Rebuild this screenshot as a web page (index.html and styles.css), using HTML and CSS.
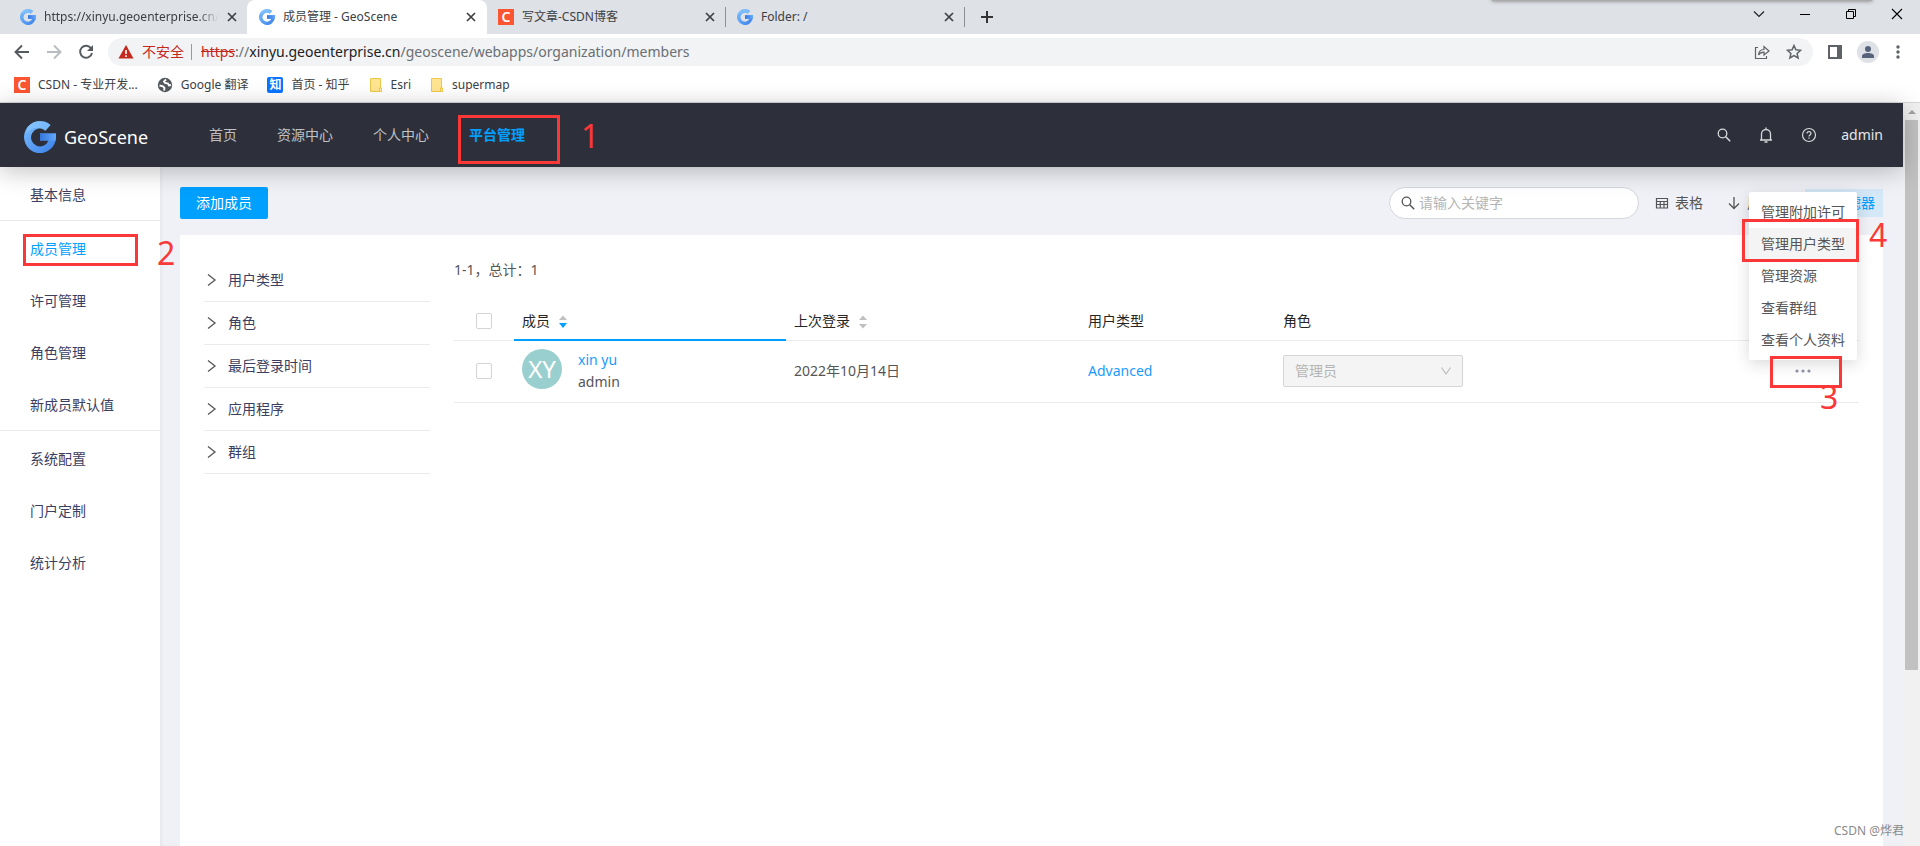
FILE: index.html
```html
<!DOCTYPE html>
<html lang="zh-CN">
<head>
<meta charset="utf-8">
<title>成员管理 - GeoScene</title>
<link rel="stylesheet" href="styles.css">
</head>
<body>
<svg class="defs" aria-hidden="true">
  <defs>
    <linearGradient id="g1" x1="0" y1="0" x2="1" y2="1"><stop offset="0" stop-color="#7cc0ff"/><stop offset="1" stop-color="#3a7fe8"/></linearGradient>
    <linearGradient id="g2" x1="0" y1="0" x2="1" y2="0"><stop offset="0" stop-color="#3577e0"/><stop offset="1" stop-color="#62a9fb"/></linearGradient>
    <symbol id="logo" viewBox="0 0 32 32">
      <path fill="url(#g1)" d="M26.500 4A16 16 0 1 0 32 16V12.500H16V19.500H24.500A9 9 0 1 1 21.500 9.200Z"/>
      <path fill="#8ac8ff" opacity=".6" d="M3 7A16 16 0 0 1 26.500 4L21.500 10A13 13 0 0 0 3 12Z"/>
      <path fill="url(#g2)" d="M16 12.500H32V16L31.500 19.500H16Z"/>
    </symbol>
    <symbol id="x" viewBox="0 0 10 10"><path d="M1 1l8 8M9 1l-8 8" stroke="#3c4043" stroke-width="1.700"/></symbol>
    <symbol id="folder" viewBox="0 0 14 16"><path d="M1.500 1.500h10v9.500h1v3.500h-11z" fill="#ffe591" stroke="#edc84a"/><path d="M10.500 14.500v-3.500h2v3.500z" fill="#fff0b5" stroke="#edc84a"/></symbol>
    <symbol id="search" viewBox="0 0 14 14"><circle cx="5.500" cy="5.500" r="4.300" fill="none" stroke="currentColor" stroke-width="1.300"/><path d="M8.700 8.700l4.500 4.500" stroke="currentColor" stroke-width="1.500"/></symbol>
    <symbol id="chev" viewBox="0 0 10 14"><path d="M1 1.500l7 5.500-7 5.500" fill="none" stroke="#555" stroke-width="1.300"/></symbol>
  </defs>
</svg>

<div class="browser">
  <div class="tabs">
    <div class="tab first"><svg class="fav"><use href="#logo"/></svg><span class="fade">https://xinyu.geoenterprise.cn/</span><button class="close" aria-label="关闭"><svg><use href="#x"/></svg></button></div>
    <div class="tab active"><svg class="fav"><use href="#logo"/></svg><span>成员管理 - GeoScene</span><button class="close" aria-label="关闭"><svg><use href="#x"/></svg></button></div>
    <div class="tab sep"><i class="csdn">C</i><span>写文章-CSDN博客</span><button class="close" aria-label="关闭"><svg><use href="#x"/></svg></button></div>
    <div class="tab sep"><svg class="fav"><use href="#logo"/></svg><span>Folder: /</span><button class="close" aria-label="关闭"><svg><use href="#x"/></svg></button></div>
    <button class="plus" aria-label="新标签页"><svg width="12" height="12"><path d="M6 0v12M0 6h12" stroke="#333" stroke-width="2"/></svg></button>
    <div class="win">
      <button aria-label="搜索标签"><svg width="12" height="12"><path d="M1 3.500l5 5 5-5" fill="none" stroke="#222" stroke-width="1.200"/></svg></button>
      <button aria-label="最小化"><svg width="12" height="12"><path d="M1 6.500h10" stroke="#000"/></svg></button>
      <button aria-label="还原"><svg width="12" height="12"><path d="M1.500 3.500h7v7h-7zM3.500 3.500v-2h7v7h-2" fill="none" stroke="#000"/></svg></button>
      <button aria-label="关闭窗口"><svg width="12" height="12"><path d="M1 1l10 10M11 1L1 11" stroke="#000" stroke-width="1.100"/></svg></button>
    </div>
    <div class="overhang"></div>
  </div>
  <div class="toolbar">
    <button aria-label="后退"><svg width="16" height="16"><path d="M15 8H2M8 1.500L1.500 8 8 14.500" fill="none" stroke="#555a5f" stroke-width="1.900"/></svg></button>
    <button aria-label="前进"><svg width="16" height="16"><path d="M1 8h13M8 1.500L14.500 8 8 14.500" fill="none" stroke="#b9bcbf" stroke-width="1.900"/></svg></button>
    <button aria-label="重新加载"><svg width="16" height="16"><path d="M13.200 4.500A6 6 0 1 0 14 9" fill="none" stroke="#555a5f" stroke-width="1.900"/><path d="M15 1v6H9z" fill="#555a5f"/></svg></button>
    <div class="url">
      <svg width="16" height="14"><path d="M8 0l7.500 13.500H.5z" fill="#c5291d"/><path d="M8 5v4M8 10.300v1.700" stroke="#fff" stroke-width="1.600"/></svg>
      <span class="unsafe">不安全</span>
      <span class="addr"><s>https</s>://<b>xinyu.geoenterprise.cn</b>/geoscene/webapps/organization/members</span>
      <button aria-label="分享"><svg width="16" height="16"><path d="M4 3.500H1.500v11h11V12" fill="none" stroke="#5f6368" stroke-width="1.200"/><path d="M4.500 11c.3-3.800 2.500-5.500 5.500-5.500V2.500l5 4.500-5 4V8.200C7.500 8.200 5.800 9 4.500 11z" fill="none" stroke="#5f6368" stroke-width="1.200"/></svg></button>
      <button aria-label="收藏"><svg width="16" height="16"><path d="M8 1.500l1.900 4.300 4.700.5-3.500 3.100 1 4.600L8 11.600 3.900 14l1-4.600L1.400 6.300l4.700-.5z" fill="none" stroke="#5f6368" stroke-width="1.500"/></svg></button>
    </div>
    <button aria-label="侧边栏"><svg width="14" height="14"><path d="M1 1h12v12H1z" fill="#fff" stroke="#5f6368" stroke-width="2"/><path d="M9 0h5v14H9z" fill="#5f6368"/></svg></button>
    <button class="profile" aria-label="用户"><svg width="22" height="22"><circle cx="11" cy="11" r="11" fill="#dee1e6"/><circle cx="11" cy="8" r="3" fill="#56627a"/><path d="M5 17v-2c0-2 3-3 6-3s6 1 6 3v2z" fill="#56627a"/></svg></button>
    <button aria-label="菜单"><svg width="6" height="16"><g fill="#5f6368"><circle cx="3" cy="3" r="1.700"/><circle cx="3" cy="8" r="1.700"/><circle cx="3" cy="13" r="1.700"/></g></svg></button>
  </div>
  <div class="bookmarks">
    <a href="#"><i class="csdn">C</i>CSDN - 专业开发...</a>
    <a href="#"><svg class="fav" viewBox="0 0 16 16"><circle cx="8" cy="8" r="7.200" fill="#555a5f"/><path d="M2.500 8.500l3.500.8 1.500 1.700-.5 2.500M9 2.500L7 4.500l1 1.500 3 .5 1 2 2-.5" fill="none" stroke="#fff" stroke-width="1.900"/></svg>Google 翻译</a>
    <a href="#"><i class="zhi">知</i>首页 - 知乎</a>
    <a href="#"><svg class="folder"><use href="#folder"/></svg>Esri</a>
    <a href="#"><svg class="folder"><use href="#folder"/></svg>supermap</a>
  </div>
</div>

<div class="viewport">
  <div class="app">
    <header class="header">
      <a class="brand" href="#"><svg width="32" height="32"><use href="#logo"/></svg>GeoScene</a>
      <nav class="nav">
        <a href="#">首页</a><a href="#">资源中心</a><a href="#">个人中心</a>
        <a href="#" class="current">平台管理<span class="mark m1"><em>1</em></span></a>
      </nav>
      <div class="tools">
        <button aria-label="搜索"><svg width="14" height="14"><use href="#search"/></svg></button>
        <button aria-label="通知"><svg width="14" height="16"><path d="M2.500 13V7a4.500 4.500 0 0 1 9 0v6M1 13h12M7 .5V2M5.500 15h3" fill="none" stroke="currentColor" stroke-width="1.300"/></svg></button>
        <button aria-label="帮助"><svg width="16" height="16"><circle cx="8" cy="8" r="6.500" fill="none" stroke="currentColor" stroke-width="1.200"/><path d="M6 6.500c0-2.600 4-2.600 4 0C10 8 8 8 8 9.500M8 10.500v1.300" fill="none" stroke="currentColor" stroke-width="1.200"/></svg></button>
        <a href="#">admin</a>
      </div>
    </header>
    <div class="body">
      <aside class="side">
        <div class="group"><a href="#">基本信息</a></div>
        <div class="group">
          <a href="#" class="current">成员管理<span class="mark m2"><em>2</em></span></a>
          <a href="#">许可管理</a><a href="#">角色管理</a><a href="#">新成员默认值</a>
        </div>
        <div class="group"><a href="#">系统配置</a><a href="#">门户定制</a><a href="#">统计分析</a></div>
      </aside>
      <main class="main">
        <div class="actions">
          <button class="primary">添加成员</button>
          <label class="search"><svg width="14" height="14"><use href="#search"/></svg><input type="text" placeholder="请输入关键字" aria-label="关键字"></label>
          <button class="tool"><svg width="14" height="14"><path d="M1 2.500h12M1.500 2v10.500M12.500 2v10.500M1 12h12M1 5.500h12M1 8.500h12M5.300 5.500V12M9 5.500V12" fill="none" stroke="#555" stroke-width="1.200"/></svg>表格</button>
          <button class="tool sort"><svg width="14" height="14"><path d="M7 1v11.500M2 7.500l5 5 5-5" fill="none" stroke="#555" stroke-width="1.300"/></svg>用户</button>
          <button class="tool filter"><svg width="14" height="14"><path d="M1 2h12L8.500 7.500V13h-3V7.500z" fill="none" stroke="currentColor"/></svg>过滤器</button>
        </div>
        <section class="card">
          <div class="facets">
            <button><svg><use href="#chev"/></svg>用户类型</button>
            <button><svg><use href="#chev"/></svg>角色</button>
            <button><svg><use href="#chev"/></svg>最后登录时间</button>
            <button><svg><use href="#chev"/></svg>应用程序</button>
            <button><svg><use href="#chev"/></svg>群组</button>
          </div>
          <div class="list">
            <p class="count">1-1，总计：1</p>
            <table>
              <colgroup><col class="c-check"><col class="c-member"><col class="c-login"><col class="c-type"><col><col class="c-more"></colgroup>
              <thead>
                <tr>
                  <th class="pick"><input type="checkbox" aria-label="全选"></th>
                  <th class="sorted">成员<svg class="sorter" viewBox="0 0 8 14"><path d="M0 5l4-4.500L8 5z" fill="#bfbfbf"/><path class="on" d="M0 8l4 5 4-5z"/></svg></th>
                  <th>上次登录<svg class="sorter" viewBox="0 0 8 14"><path d="M0 5l4-4.500L8 5zM0 9l4 4.500L8 9z" fill="#bfbfbf"/></svg></th>
                  <th>用户类型</th><th>角色</th><th></th>
                </tr>
              </thead>
              <tbody>
                <tr>
                  <td class="pick"><input type="checkbox" aria-label="选择 xin yu"></td>
                  <td><div class="member"><span class="avatar">XY</span><span class="who"><a href="#">xin yu</a><span>admin</span></span></div></td>
                  <td>2022年10月14日</td>
                  <td><a href="#">Advanced</a></td>
                  <td><div class="select"><select disabled aria-label="角色"><option>管理员</option></select><svg width="12" height="12"><path d="M1.500 2.500L6 9l4.500-6.500" fill="none" stroke="#bbb" stroke-width="1.100"/></svg></div></td>
                  <td class="more">
                    <button class="dots" aria-label="更多"><svg width="16" height="4"><g fill="#8d93a8"><circle cx="2" cy="2" r="1.600"/><circle cx="8" cy="2" r="1.600"/><circle cx="14" cy="2" r="1.600"/></g></svg></button>
                    <div class="menu">
                      <a href="#">管理附加许可</a>
                      <a href="#" class="hover">管理用户类型<span class="mark m4"><em>4</em></span></a>
                      <a href="#">管理资源</a><a href="#">查看群组</a><a href="#">查看个人资料</a>
                    </div>
                    <span class="mark m3"><em>3</em></span>
                  </td>
                </tr>
              </tbody>
            </table>
          </div>
        </section>
      </main>
    </div>
  </div>
  <div class="scrollbar"><svg width="8" height="4"><path d="M0 4l4-4 4 4z" fill="#a3a3a3"/></svg><div class="thumb"></div></div>
  <div class="watermark">CSDN @烨君</div>
</div>
</body>
</html>
```
FILE: styles.css
```css
* { box-sizing: border-box; }
body {
  margin: 0;
  height: 100vh;
  display: flex;
  flex-direction: column;
  overflow: hidden;
  font: 14px/20px "Noto Sans", "Noto Sans CJK SC", sans-serif;
  color: #555;
  background: #fff;
}
.defs { position: absolute; width: 0; height: 0; }
button { padding: 0; border: 0; background: none; font: inherit; color: inherit; display: flex; align-items: center; }
a { color: inherit; text-decoration: none; }
svg { display: block; flex: none; }

/* browser frame */
.browser { flex: none; color: #3c4043; font-size: 12px; border-bottom: 1px solid #d5d7da; }
.tabs { position: relative; display: flex; align-items: center; height: 34px; background: #dee1e6; }
.tab { display: flex; align-items: center; gap: 8px; width: 239px; height: 28px; padding: 0 10px 0 11px; white-space: nowrap; }
.tab.first { width: 247px; padding: 0 10px 0 20px; }
.tab.active { width: 240px; height: 34px; padding: 0 11px 0 12px; background: #fff; border-radius: 8px 8px 0 0; }
.tab.sep { border-right: 1px solid #8b8e92; height: 20px; }
.tab span { flex: 1; min-width: 0; overflow: hidden; }
.fade { -webkit-mask-image: linear-gradient(90deg, #000 88%, transparent); mask-image: linear-gradient(90deg, #000 88%, transparent); }
.fav { width: 16px; height: 16px; }
.close svg { width: 10px; height: 10px; }
.csdn, .zhi { width: 16px; height: 16px; flex: none; background: #fc5531; color: #fff; font-style: normal; font-weight: 600; font-size: 14px; line-height: 16px; text-align: center; }
.zhi { background: #0a74ff; border-radius: 2px; font-size: 12px; }
.plus { margin-left: 16px; }
.win { margin-left: auto; display: flex; gap: 34px; padding: 0 17px 6px 0; }
.overhang { position: absolute; top: -4px; right: 48px; width: 380px; height: 5px; background: #aaa; box-shadow: 0 0 4px #777; }
.toolbar { display: flex; align-items: center; gap: 16px; height: 36px; padding: 0 19px 0 14px; }
.url { flex: 1; display: flex; align-items: center; height: 28px; margin: 0 -1px 0 -2px; padding: 0 11px 0 10px; border-radius: 14px; background: #f1f3f4; font-size: 14px; }
.profile { margin-left: -1px; }
.unsafe { margin: 0 9px 0 8px; padding-right: 7px; line-height: 16px; border-right: 1px solid #999; color: #c5291d; }
.url button { margin-left: 16px; }
.addr { flex: 1; color: #6b6f73; }
.addr b { font-weight: 400; color: #202124; }
.addr s { color: #c5291d; }
.bookmarks { display: flex; align-items: center; gap: 19px; height: 32px; padding: 0 14px 2px; }
.bookmarks a { display: flex; align-items: center; gap: 8px; }
.folder { width: 14px; height: 16px; }

/* application */
.viewport { position: relative; flex: 1; min-height: 0; display: flex; }
.app { flex: 1; min-width: 0; display: flex; flex-direction: column; }
.header { position: relative; z-index: 1; flex: none; display: flex; align-items: center; height: 64px; padding: 0 20px 0 24px; background: #2d303b; color: #bfc0c4; box-shadow: 0 4px 24px rgba(0, 0, 0, .25); }
.brand { display: flex; align-items: center; gap: 8px; width: 185px; padding-top: 4px; color: #fff; font-size: 18px; }
.nav { display: flex; gap: 40px; }
.nav a { position: relative; }
.nav .current { color: #00a0ff; font-weight: 700; }
.tools { margin-left: auto; display: flex; align-items: center; gap: 28px; color: #d8d9dc; }
.tools a { color: #e6e6e8; margin-left: -4px; }
.body { flex: 1; min-height: 0; display: flex; }
.side { flex: none; width: 160px; background: #fff; color: #3c4060; }
.group { display: flex; flex-direction: column; gap: 12px; padding: 8px 0 5px; border-bottom: 1px solid #e9e9ec; }
.group:last-child { border: 0; }
.group a { position: relative; padding-left: 30px; line-height: 40px; }
.side .current { color: #00a0ff; }
.main { flex: 1; min-width: 0; display: flex; flex-direction: column; gap: 16px; padding: 20px 20px 0; background: #eff1f6; box-shadow: inset 2px 0 3px rgba(0, 0, 0, .04); }
.actions { display: flex; align-items: center; }
.primary { height: 32px; padding: 0 16px; border-radius: 2px; background: #00a0ff; color: #fff; }
.search { display: flex; align-items: center; gap: 4px; width: 250px; height: 32px; margin-left: auto; padding: 0 11px; border: 1px solid #d4d6da; border-radius: 16px; background: #fff; }
.search input { flex: 1; min-width: 0; padding: 0; border: 0; outline: 0; background: none; font: inherit; }
.search input::placeholder { color: #b5b5b5; }
.tool { gap: 6px; margin-left: 16px; }
.sort { margin: 0 30px 0 24px; }
.filter { margin: 0; height: 28px; padding: 0 8px; background: #d4e8f7; color: #00a0ff; }
.card { flex: 1; display: flex; gap: 24px; padding: 24px; background: #fff; }
.facets { flex: none; width: 226px; }
.facets button { width: 100%; height: 43px; gap: 11px; padding-left: 3px; border-bottom: 1px solid #ebebeb; color: #3c4060; }
.facets svg { width: 10px; height: 14px; }
.list { flex: 1; min-width: 0; }
.count { margin: 0; padding-top: 1px; }
table { width: 100%; margin-top: 22px; table-layout: fixed; border-collapse: separate; border-spacing: 0; }
.c-check { width: 60px; }
.c-member { width: 272px; }
.c-login { width: 294px; }
.c-type { width: 195px; }
.c-more { width: 112px; }
th, td { padding: 0 8px; border-bottom: 1px solid #ebebeb; text-align: left; font-weight: 400; }
th { height: 39px; color: #262626; }
td { height: 62px; padding-bottom: 2px; }
td a { color: #1a9bfc; }
.sorted { border-bottom: 2px solid #00a0ff; }
.sorter { display: inline-block; width: 8px; height: 14px; margin-left: 9px; vertical-align: -3px; }
.sorter .on { fill: #00a0ff; }
.pick { padding-left: 22px; }
input[type="checkbox"] { appearance: none; display: block; width: 16px; height: 16px; margin: 0; border: 1px solid #d4d4d4; border-radius: 2px; background: #fff; }
.member { display: flex; align-items: flex-start; gap: 16px; }
.avatar { width: 40px; height: 40px; border-radius: 50%; background: #99d0cf; color: #fff; font-size: 24px; line-height: 40px; text-align: center; }
.who { display: flex; flex-direction: column; line-height: 22px; }
.select { position: relative; width: 180px; }
.select select { display: block; appearance: none; width: 100%; height: 32px; padding: 0 11px; border: 1px solid #d4d4d4; border-radius: 2px; background: #f4f4f4; color: #b5b5b5; font: inherit; opacity: 1; }
.select svg { position: absolute; right: 11px; top: 10px; }
.more { position: relative; }
.dots { margin: 0 auto; height: 20px; }
.menu { position: absolute; z-index: 2; right: 2px; bottom: 42px; padding: 4px 0; border-radius: 2px; background: #fff; box-shadow: 0 4px 16px rgba(0, 0, 0, .15); }
.menu a { position: relative; display: block; padding: 0 12px; line-height: 32px; color: #555; white-space: nowrap; }
.menu .hover { background: #f4f4f4; }

/* numbered callouts */
.mark { position: absolute; z-index: 3; border: 3px solid #fb3838; color: #fb3838; font-weight: 400; }
.mark em { position: absolute; font: 32px/32px "Noto Sans", sans-serif; }
.m1 { left: -11px; top: -10px; width: 102px; height: 49px; }
.m1 em { left: 120px; top: 2px; }
.m2 { left: 23px; top: 5px; width: 115px; height: 32px; }
.m2 em { left: 131px; top: 0; }
.m3 { left: 23px; top: 15px; width: 72px; height: 32px; }
.m3 em { left: 47px; top: 22px; }
.m4 { left: -7px; top: -9px; width: 117px; height: 43px; }
.m4 em { left: 124px; top: -3px; }

.scrollbar { flex: none; width: 17px; padding: 7px 2px 0; background: #f1f1f1; }
.scrollbar svg { margin: 0 auto 6px; }
.thumb { height: 550px; max-height: 75%; background: #c1c1c1; }
.watermark { position: absolute; right: 16px; bottom: 5px; font-size: 12px; color: #8a8a8a; }
```
